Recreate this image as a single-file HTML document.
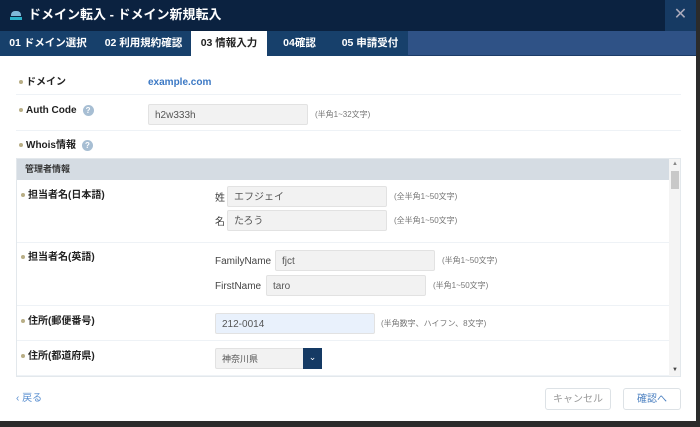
<!DOCTYPE html><html><head><meta charset="utf-8"><style>
*{margin:0;padding:0;box-sizing:border-box}
body{width:700px;height:427px;background:#2b2b2b;font-family:"Liberation Sans","Noto Sans CJK JP",sans-serif;position:relative;overflow:hidden;font-size:10px;color:#333}
.a{position:absolute}
.dlg{left:0;top:0;width:696px;height:421px;background:#fff}
.hd{left:0;top:0;width:696px;height:31px;background:#0b2240;color:#fff;font-size:13px;font-weight:bold}
.tabs{left:0;top:31px;width:696px;height:25px;background:#2f5286;border-bottom:1px solid #1c3c68}
.tab{position:absolute;top:0;height:25px;padding-top:6px;color:#fff;font-size:10.5px;background:#17406b;text-align:center;font-weight:bold;line-height:13px}
.lbl{font-weight:bold;font-size:10px;color:#222;line-height:13px}
.dot{display:inline-block;width:4px;height:4px;border-radius:50%;background:#b8ae86;margin-right:3px;vertical-align:middle}
.ln{height:1px;background:#eef2f6}
.inp{background:#f2f2f2;border:1px solid #e2e2e2;border-radius:2px;font-size:10px;padding:4px 0 0 6px;color:#555;line-height:13px;height:21px}
.hint{font-size:8px;color:#777;line-height:10px}
.q{display:inline-block;width:11px;height:11px;border-radius:50%;background:#a7bed3;color:#fff;font-size:8px;text-align:center;line-height:11px;margin-left:6px;vertical-align:middle}
.btn{border:1px solid #dde2e6;border-radius:3px;background:#fff;font-size:10px;text-align:center;line-height:13px;padding-top:4px;height:22px}
.t{line-height:13px;font-size:10px;color:#444}
</style></head><body>
<div class="a dlg"></div>
<div class="a hd"><div class="a" style="left:11px;top:11px;width:10px;height:5px;background:#7fb8d8;border-radius:4px 4px 0 0"></div><div class="a" style="left:10px;top:17px;width:12px;height:3px;background:#2bb0c8"></div><div class="a" style="left:28px;top:7px;line-height:16px">ドメイン転入 - ドメイン新規転入</div>
<div class="a" style="left:665px;top:0;width:31px;height:31px;background:#163a63;color:#aab;font-size:16px;text-align:center;line-height:30px;font-weight:normal">✕</div></div>
<div class="a tabs">
<div class="tab" style="left:0;width:96px">01 ドメイン選択</div>
<div class="tab" style="left:96px;width:95px">02 利用規約確認</div>
<div class="tab" style="left:191px;width:76px;background:#fff;color:#222;height:26px">03 情報入力</div>
<div class="tab" style="left:267px;width:65px">04確認</div>
<div class="tab" style="left:332px;width:76px">05 申請受付</div>
</div>
<div class="a lbl" style="left:19px;top:76px"><span class="dot"></span>ドメイン</div>
<div class="a" style="left:148px;top:76px;color:#3b78c4;font-weight:bold;font-size:10px;line-height:13px">example.com</div>
<div class="a ln" style="left:16px;top:94px;width:665px"></div>
<div class="a lbl" style="left:19px;top:104px"><span class="dot"></span>Auth Code<span class="q">?</span></div>
<div class="a inp" style="left:148px;top:104px;width:160px">h2w333h</div>
<div class="a hint" style="left:315px;top:110px">(半角1~32文字)</div>
<div class="a ln" style="left:16px;top:130px;width:665px"></div>
<div class="a lbl" style="left:19px;top:139px"><span class="dot"></span>Whois情報<span class="q">?</span></div>
<div class="a" style="left:16px;top:158px;width:665px;height:219px;border:1px solid #e3e8ec;overflow:hidden">
<div class="a" style="left:0;top:0;width:652px;height:21px;background:#d5dce3;font-size:9px;font-weight:bold;padding:5px 0 0 8px;line-height:11px">管理者情報</div>
<div class="a" style="left:652px;top:0;width:12px;height:219px;background:#f4f4f4"><div class="a" style="left:2px;top:12px;width:8px;height:18px;background:#c8c8c8"></div><div class="a" style="left:3px;top:2px;font-size:6px;color:#888">▲</div><div class="a" style="left:3px;top:208px;font-size:6px;color:#444">▼</div></div>
<div class="a lbl" style="left:4px;top:30px"><span class="dot"></span>担当者名(日本語)</div>
<div class="a t" style="left:198px;top:33px">姓</div><div class="a inp" style="left:210px;top:27px;width:160px">エフジェイ</div><div class="a hint" style="left:377px;top:33px">(全半角1~50文字)</div>
<div class="a t" style="left:198px;top:57px">名</div><div class="a inp" style="left:210px;top:51px;width:160px">たろう</div><div class="a hint" style="left:377px;top:57px">(全半角1~50文字)</div>
<div class="a ln" style="left:0;top:83px;width:652px"></div>
<div class="a lbl" style="left:4px;top:92px"><span class="dot"></span>担当者名(英語)</div>
<div class="a t" style="left:198px;top:96px">FamilyName</div><div class="a inp" style="left:258px;top:91px;width:160px">fjct</div><div class="a hint" style="left:425px;top:97px">(半角1~50文字)</div>
<div class="a t" style="left:198px;top:121px">FirstName</div><div class="a inp" style="left:249px;top:116px;width:160px">taro</div><div class="a hint" style="left:416px;top:122px">(半角1~50文字)</div>
<div class="a ln" style="left:0;top:146px;width:652px"></div>
<div class="a lbl" style="left:4px;top:156px"><span class="dot"></span>住所(郵便番号)</div>
<div class="a inp" style="left:198px;top:154px;width:160px;background:#e9f1fc">212-0014</div><div class="a hint" style="left:364px;top:160px">(半角数字、ハイフン、8文字)</div>
<div class="a ln" style="left:0;top:181px;width:652px"></div>
<div class="a lbl" style="left:4px;top:191px"><span class="dot"></span>住所(都道府県)</div>
<div class="a inp" style="left:198px;top:189px;width:107px;font-size:9px">神奈川県</div><div class="a" style="left:286px;top:189px;width:19px;height:21px;background:#153a64;color:#fff;text-align:center;line-height:18px;font-size:9px">⌄</div>
<div class="a ln" style="left:0;top:216px;width:652px"></div>
</div>
<div class="a" style="left:16px;top:392px;color:#5a8fd0;font-size:10px;line-height:13px">‹ 戻る</div>
<div class="a btn" style="left:545px;top:388px;width:66px;color:#999">キャンセル</div>
<div class="a btn" style="left:623px;top:388px;width:58px;color:#4a7fc0">確認へ</div>
</body></html>
